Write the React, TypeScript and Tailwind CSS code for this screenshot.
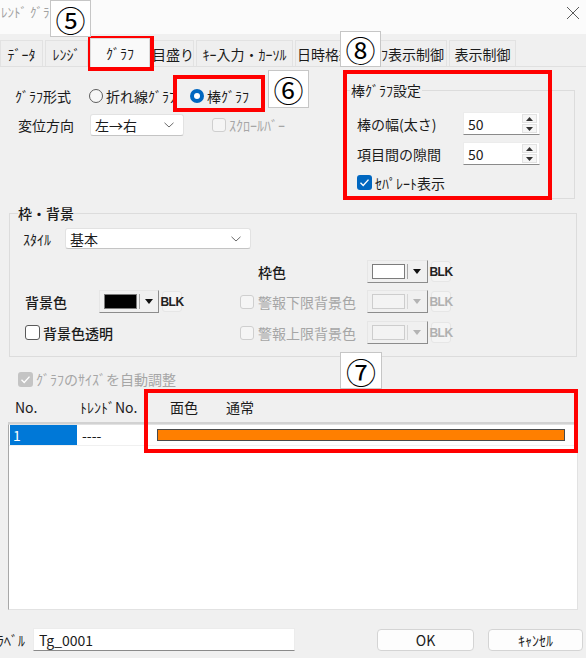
import React from 'react';

const jp = "font-['Noto_Sans_CJK_JP','Noto_Sans',sans-serif]";

function Annot({ n, className }: { n: string; className: string }) {
    return (
        <div
            className={`absolute flex items-center justify-center border border-[#c6c6c6] bg-white text-[30px] leading-none text-black ${className}`}
        >
            {n}
        </div>
    );
}

function RedBox({ className }: { className: string }) {
    return (
        <div
            className={`pointer-events-none absolute border-[4px] border-[#ff0000] ${className}`}
        />
    );
}

function Radio({ checked }: { checked?: boolean }) {
    if (checked) {
        return (
            <span className="flex h-[14px] w-[14px] items-center justify-center rounded-full bg-[#0067c0]">
                <span className="h-[6px] w-[6px] rounded-full bg-white" />
            </span>
        );
    }
    return (
        <span className="h-[14px] w-[14px] rounded-full border border-[#5d5d5d] bg-[#f7f7f7]" />
    );
}

function CheckMark() {
    return (
        <svg width="11" height="11" viewBox="0 0 11 11">
            <path
                d="M1.5 5.8 L4.2 8.4 L9.5 2.6"
                fill="none"
                stroke="white"
                strokeWidth="1.4"
            />
        </svg>
    );
}

function Check({
    checked,
    disabled,
}: {
    checked?: boolean;
    disabled?: boolean;
}) {
    if (checked && !disabled) {
        return (
            <span className="flex h-[15px] w-[15px] items-center justify-center rounded-[3px] bg-[#0067c0]">
                <CheckMark />
            </span>
        );
    }
    if (checked && disabled) {
        return (
            <span className="flex h-[15px] w-[15px] items-center justify-center rounded-[3px] bg-[#c4c4c4]">
                <CheckMark />
            </span>
        );
    }
    if (disabled) {
        return (
            <span className="h-[14px] w-[14px] rounded-[3px] border border-[#cfcfcf] bg-[#f5f5f5]" />
        );
    }
    return (
        <span className="h-[15px] w-[15px] rounded-[3px] border border-[#5a5a5a] bg-white" />
    );
}

function Chevron() {
    return (
        <svg width="10" height="6" viewBox="0 0 10 6">
            <path
                d="M0.5 0.8 L5 5 L9.5 0.8"
                fill="none"
                stroke="#6a6a6a"
                strokeWidth="1"
            />
        </svg>
    );
}

function Select({ text, className }: { text: string; className: string }) {
    return (
        <div
            className={`flex items-center justify-between rounded-[3px] border border-[#e2e2e2] border-b-[#c4c4c4] bg-white pl-[4px] pr-[9px] ${className}`}
        >
            <span>{text}</span>
            <Chevron />
        </div>
    );
}

function ColorBtn({
    swatch,
    disabled,
    w = 'w-[61px]',
}: {
    swatch: string;
    disabled?: boolean;
    w?: string;
}) {
    return (
        <div
            className={`flex h-[23px] ${w} items-center border border-[#e6e6e6] border-b-[#8c8c8c] border-r-[#8c8c8c] bg-[#f0f0f0] pl-[4px]`}
        >
            <span
                className={`h-[15px] w-[33px] border ${swatch} ${disabled ? 'border-[#cdcdcd]' : 'border-[#7c7c7c]'}`}
            />
            <span
                className={`ml-[2px] h-[15px] w-px ${disabled ? 'bg-[#d6d6d6]' : 'bg-[#a8a8a8]'}`}
            />
            <svg width="8" height="5" viewBox="0 0 8 5" className="ml-[5px]">
                <path d="M0 0 H8 L4 5 Z" fill={disabled ? '#b4b4b4' : '#111'} />
            </svg>
        </div>
    );
}

function Blk({ disabled }: { disabled?: boolean }) {
    return (
        <span
            className={`ml-[3px] flex h-[21px] w-[20px] items-center justify-center rounded-[3px] border border-[#e6e6e6] bg-[#f4f4f4] font-['Liberation_Sans_Narrow','Liberation_Sans',sans-serif] text-[12px] font-bold tracking-[-0.5px] ${disabled ? 'text-[#b0b0b0]' : 'text-[#222]'}`}
        >
            BLK
        </span>
    );
}

function Spin({ value }: { value: string }) {
    return (
        <div className="flex h-[23px] w-[77px] items-center justify-between border border-[#ececec] border-b-[#8a8a8a] bg-white pl-[4px] pr-[2px]">
            <span>{value}</span>
            <div className="flex flex-col gap-[1px]">
                <span className="flex h-[9px] w-[15px] items-center justify-center border border-[#e2e2e2] bg-[#f6f6f6]">
                    <svg width="7" height="4" viewBox="0 0 7 4">
                        <path d="M0 4 H7 L3.5 0 Z" fill="#333" />
                    </svg>
                </span>
                <span className="flex h-[9px] w-[15px] items-center justify-center border border-[#e2e2e2] bg-[#f6f6f6]">
                    <svg width="7" height="4" viewBox="0 0 7 4">
                        <path d="M0 0 H7 L3.5 4 Z" fill="#333" />
                    </svg>
                </span>
            </div>
        </div>
    );
}

const tabs = [
    { label: 'ﾃﾞｰﾀ', w: 'w-[43px]' },
    { label: 'ﾚﾝｼﾞ', w: 'w-[43px]' },
    { label: 'ｸﾞﾗﾌ', w: 'w-[60px]', active: true },
    { label: '目盛り', w: 'w-[42px]' },
    { label: 'ｷｰ入力・ｶｰｿﾙ', w: 'w-[97px]' },
    { label: '日時格納', w: 'w-[60px]' },
    { label: 'ｸﾞﾗﾌ表示制御', w: 'w-[90px]' },
    { label: '表示制御', w: 'w-[67px]' },
];

export default function App() {
    return (
        <div
            className={`relative h-[658px] w-[586px] overflow-hidden bg-[#f0f0f0] text-[14px] leading-none text-[#1b1b1b] ${jp}`}
        >
            {/* title bar */}
            <div className="flex h-[34px] items-start justify-between bg-[#fbfbfb] pr-[6px] pt-[5px]">
                <span className="pl-[1px] text-[13px] text-[#a2a2a2]">
                    ﾚﾝﾄﾞ ｸﾞﾗﾌ
                </span>
                <svg width="14" height="14" viewBox="0 0 14 14" className="mt-px">
                    <path
                        d="M1 1 L13 13 M13 1 L1 13"
                        stroke="#5a5a5a"
                        strokeWidth="1"
                    />
                </svg>
            </div>

            {/* tabs */}
            <div className="mt-[4px] flex h-[28px] items-end gap-[2px] whitespace-nowrap">
                {tabs.map((t) => (
                    <div
                        key={t.label}
                        className={`flex shrink-0 items-center justify-center border border-b-0 ${t.w} ${
                            t.active
                                ? 'relative z-10 -mb-px h-[29px] border-[#dadada] bg-[#f9f9f9]'
                                : 'h-[26px] border-[#e2e2e2] bg-[#efefef]'
                        }`}
                    >
                        {t.label}
                    </div>
                ))}
            </div>

            <div className="border-t border-[#e0e0e0]">
                {/* graph type + bar settings */}
                <div className="flex h-[138px]">
                    <div className="flex w-[346px] flex-col">
                        <div className="mt-[17px] flex h-[24px] items-center">
                            <span className="ml-[15px] w-[74px]">ｸﾞﾗﾌ形式</span>
                            <div className="flex w-[101px] items-center gap-[3px]">
                                <Radio />
                                <span>折れ線ｸﾞﾗﾌ</span>
                            </div>
                            <div className="flex items-center gap-[3px]">
                                <Radio checked />
                                <span>棒ｸﾞﾗﾌ</span>
                            </div>
                        </div>
                        <div className="mt-[6px] flex h-[22px] items-center">
                            <span className="ml-[18px] w-[72px]">変位方向</span>
                            <Select text="左→右" className="h-[22px] w-[94px]" />
                            <div className="ml-[28px] flex items-center gap-[3px] text-[#a6a6a6]">
                                <Check disabled />
                                <span>ｽｸﾛｰﾙﾊﾞｰ</span>
                            </div>
                        </div>
                    </div>

                    <fieldset className="mt-[16px] h-[116px] w-[229px] border border-[#dcdcdc]">
                        <legend className="ml-[3px] px-px">棒ｸﾞﾗﾌ設定</legend>
                        <div className="mt-[15px] flex h-[23px] items-center">
                            <span className="ml-[10px] w-[106px]">棒の幅(太さ)</span>
                            <Spin value="50" />
                        </div>
                        <div className="mt-[7px] flex h-[23px] items-center">
                            <span className="ml-[10px] w-[106px]">項目間の隙間</span>
                            <Spin value="50" />
                        </div>
                        <div className="mt-[10px] flex h-[15px] items-center gap-[3px] pl-[10px]">
                            <Check checked />
                            <span>ｾﾊﾟﾚｰﾄ表示</span>
                        </div>
                    </fieldset>
                </div>

                {/* frame / background */}
                <fieldset className="ml-[9px] mt-px w-[568px] border border-[#dcdcdc] pb-[12px]">
                    <legend className="ml-[8px] font-medium">枠・背景</legend>
                    <div className="mt-[8px] flex h-[21px] items-center">
                        <span className="ml-[13px] w-[42px]">ｽﾀｲﾙ</span>
                        <Select text="基本" className="h-[21px] w-[186px]" />
                    </div>
                    <div className="mt-[11px] flex h-[23px] items-center">
                        <div className="w-[225px]" />
                        <span className="ml-[23px] w-[109px] font-medium">枠色</span>
                        <ColorBtn swatch="bg-white" />
                        <Blk />
                    </div>
                    <div className="mt-[7px] flex h-[23px] items-center">
                        <div className="flex w-[225px] items-center">
                            <span className="ml-[15px] w-[74px] font-medium">背景色</span>
                            <ColorBtn swatch="bg-black" w="w-[60px]" />
                            <Blk />
                        </div>
                        <div className="flex w-[132px] items-center gap-[4px] pl-[5px] text-[#a6a6a6]">
                            <Check disabled />
                            <span>警報下限背景色</span>
                        </div>
                        <ColorBtn swatch="bg-[#f3f3f3]" disabled />
                        <Blk disabled />
                    </div>
                    <div className="mt-[8px] flex h-[23px] items-center">
                        <div className="flex w-[225px] items-center gap-[3px] pl-[15px]">
                            <Check />
                            <span className="font-medium">背景色透明</span>
                        </div>
                        <div className="flex w-[132px] items-center gap-[4px] pl-[5px] text-[#a6a6a6]">
                            <Check disabled />
                            <span>警報上限背景色</span>
                        </div>
                        <ColorBtn swatch="bg-[#f3f3f3]" disabled />
                        <Blk disabled />
                    </div>
                </fieldset>

                {/* auto size */}
                <div className="ml-[18px] mt-[15px] flex h-[14px] items-center gap-[3px] text-[#a6a6a6]">
                    <Check checked disabled />
                    <span>ｸﾞﾗﾌのｻｲｽﾞを自動調整</span>
                </div>

                {/* list */}
                <div className="ml-[8px] mt-[6px] w-[570px]">
                    <div className="flex h-[32px] items-center border-b-2 border-[#d2d2d2]">
                        <span className="ml-[7px] w-[65px]">No.</span>
                        <span className="w-[90px]">ﾄﾚﾝﾄﾞNo.</span>
                        <span className="w-[56px]">面色</span>
                        <span>通常</span>
                    </div>
                    <div className="h-[186px] border border-[#e2e2e2] border-l-[#a8a8a8] bg-white">
                        <div className="flex h-[21px] items-center border-b border-[#f0f0f0]">
                            <span className="ml-px flex h-full w-[67px] items-center bg-[#0078d7] pl-[3px] text-white">
                                1
                            </span>
                            <span className="ml-[5px] w-[75px]">----</span>
                            <span className="h-[12px] w-[408px] border border-[#4a4a4a] bg-[#ff7f00]" />
                        </div>
                    </div>
                </div>

                {/* bottom row */}
                <div className="mt-[18px] flex h-[23px] items-center">
                    <span className="-ml-[3px] w-[36px]">ﾗﾍﾞﾙ</span>
                    <div className="flex h-[23px] w-[262px] items-center border border-[#ececec] border-b-[#8a8a8a] bg-white pl-[5px]">
                        Tg_0001
                    </div>
                    <button className="ml-[82px] h-[22px] w-[97px] rounded-[4px] border border-[#d4d4d4] bg-[#fdfdfd]">
                        OK
                    </button>
                    <button className="ml-[14px] h-[22px] w-[95px] rounded-[4px] border border-[#d4d4d4] bg-[#fdfdfd]">
                        ｷｬﾝｾﾙ
                    </button>
                </div>
            </div>

            {/* annotations */}
            <RedBox className="left-[88px] top-[36px] h-[35px] w-[66px]" />
            <RedBox className="left-[173px] top-[75px] h-[37px] w-[92px]" />
            <RedBox className="left-[343px] top-[70px] h-[130px] w-[209px]" />
            <RedBox className="left-[144px] top-[389px] h-[64px] w-[434px]" />
            <Annot n="⑤" className="left-[50px] top-0 h-[37px] w-[41px]" />
            <Annot n="⑥" className="left-[268px] top-[70px] h-[38px] w-[41px]" />
            <Annot n="⑧" className="left-[340px] top-[31px] h-[36px] w-[41px]" />
            <Annot n="⑦" className="left-[340px] top-[352px] h-[37px] w-[42px]" />
        </div>
    );
}
